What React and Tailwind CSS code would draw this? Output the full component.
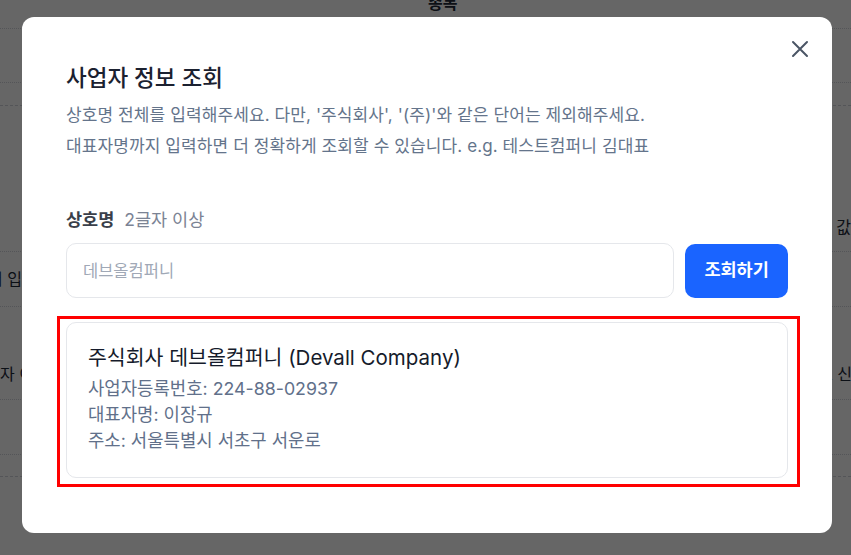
import { useState } from "react";

const BackgroundPage = () => {
  return (
    <div className="flex flex-col text-[16px] text-gray-800">
      <div className="h-[29px] border-b border-dotted border-gray-300 pl-[428px]">
        <div className="-mt-[9px] leading-[24px] font-semibold">종목</div>
      </div>
      <div className="h-[54px] border-b border-dotted border-gray-300" />
      <div className="h-[23px] border-b border-dashed border-gray-300" />
      <div className="h-[146px] border-b border-dotted border-gray-300 flex items-end justify-end pb-[12px]">
        <span className="leading-[24px] pl-[836px] whitespace-nowrap">값</span>
      </div>
      <div className="h-[55px] border-b border-dotted border-gray-300 flex items-center">
        <span className="-ml-[12px] leading-[24px] whitespace-nowrap">어 입력</span>
      </div>
      <div className="h-[93px] border-b border-dotted border-gray-300 flex items-end justify-between pb-[13px] overflow-hidden">
        <span className="leading-[24px] whitespace-nowrap">자 이름</span>
        <span className="leading-[24px] whitespace-nowrap -mr-[1px]">로 신</span>
      </div>
      <div className="h-[55px] border-b border-dotted border-gray-300" />
      <div className="h-[22px] border-b border-dashed border-gray-300" />
    </div>
  );
};

const App = () => {
  const [companyName, setCompanyName] = useState("");

  return (
    <div className="relative w-[851px] h-[555px] overflow-hidden bg-white font-[Inter,'Noto_Sans_CJK_KR',sans-serif]">
      <BackgroundPage />

      {/* dimmed overlay + modal */}
      <div className="absolute inset-0 bg-black/60 pl-[22px] pt-[17px]">
        <div className="relative w-[810px] rounded-xl bg-white px-[44px] pt-[46px] pb-[55px]">
          <button className="absolute right-[23px] top-[23px] flex items-center justify-center text-gray-600">
            <svg className="block" width="18" height="18" viewBox="0 0 18 18" fill="none" stroke="currentColor" strokeWidth="2" strokeLinecap="round">
              <path d="M2 2L16 16M16 2L2 16" />
            </svg>
          </button>

          <h2 className="text-[22.5px] leading-[30px] font-medium text-[#1b2130]">사업자 정보 조회</h2>
          <div className="mt-[7px] text-[17px] tracking-[0.1px] leading-[31px] text-[#64748b]">
            <p>상호명 전체를 입력해주세요. 다만, '주식회사', '(주)'와 같은 단어는 제외해주세요.</p>
            <p>대표자명까지 입력하면 더 정확하게 조회할 수 있습니다. e.g. 테스트컴퍼니 김대표</p>
          </div>

          <div className="mt-[46px] flex items-center gap-[10px] leading-[24px] text-[17.5px]">
            <label className="font-semibold text-[#3a3f4a]">상호명</label>
            <span className="text-[#7b8394]">2글자 이상</span>
          </div>

          <div className="mt-[11px] flex items-center gap-[11px]">
            <input
              type="text"
              value={companyName}
              onChange={(e) => setCompanyName(e.target.value)}
              placeholder="데브올컴퍼니"
              className="h-[55px] w-[609px] rounded-[10px] border border-[#e5e7eb] px-4 text-[16.5px] text-gray-800 placeholder:text-[#a0a8b6] outline-none"
            />
            <button className="h-[54px] w-[103px] rounded-[10px] bg-[#1a64ff] text-[17.5px] font-semibold text-white">
              조회하기
            </button>
          </div>

          <div className="relative mt-[24px]">
            <div className="h-[156px] rounded-[10px] border border-[#e5e7eb] px-[21px] pt-[21px]">
              <p className="text-[20.5px] leading-[28px] text-[#151b2b]">주식회사 데브올컴퍼니 (Devall Company)</p>
              <div className="mt-1 text-[17.8px] leading-[26px] text-[#61708a]">
                <p>사업자등록번호: 224-88-02937</p>
                <p>대표자명: 이장규</p>
                <p>주소: 서울특별시 서초구 서운로</p>
              </div>
            </div>
            {/* highlight box */}
            <div className="pointer-events-none absolute -left-[9px] -top-[6px] -right-[12px] -bottom-[9px] border-[3px] border-[#ff0000]" />
          </div>
        </div>
      </div>
    </div>
  );
};

export default App;
